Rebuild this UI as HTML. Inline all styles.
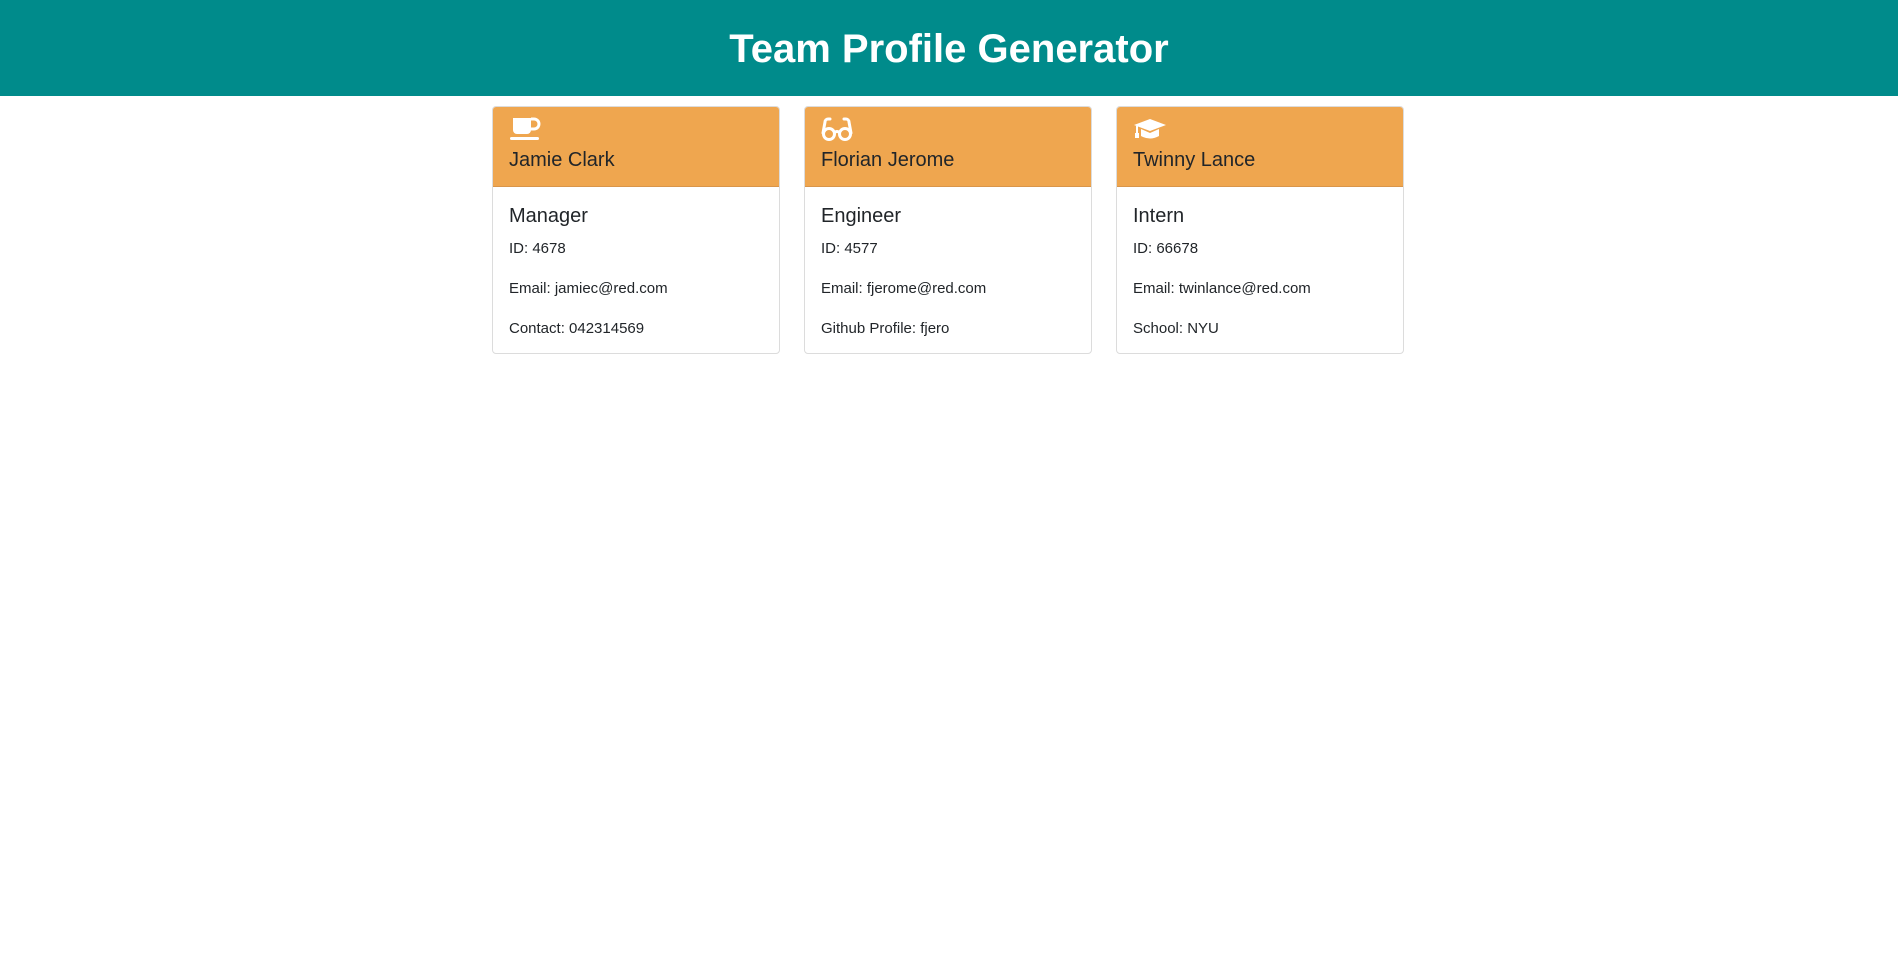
<!DOCTYPE html>
<html><head><style>
body{margin:0;font-family:"Liberation Sans",sans-serif;color:#212529;background:#fff;width:1898px;height:956px;overflow:hidden}
.top{background:#008b8b;height:96px;color:#fff;text-align:center;font-weight:bold;font-size:40px;line-height:98px}
.cards{position:relative}
.card{position:absolute;top:10px;width:286px;height:246px;border:1px solid #dcdcdc;border-radius:4px;overflow:hidden}
.hd{background:#efa64f;height:79px;border-bottom:1px solid #d9954a;position:relative}
.hd svg{position:absolute;left:16px;top:10px}
.hd .n{position:absolute;left:16px;top:42px;font-size:20px}
.bd{padding:16px}
.bd h3{margin:0 0 8px;font-size:20px;font-weight:500;line-height:26px}
.bd p{margin:0 0 16px;font-size:15px;line-height:24px}
</style></head><body>
<div class="top">Team Profile Generator</div>
<div class="cards">
<div class="card" style="left:492px"><div class="hd">
<svg width="32" height="24" viewBox="0 0 32 24"><path d="M4 1h18v12a4 4 0 0 1-4 4H8a4 4 0 0 1-4-4z" fill="#fff"/><path d="M22 2h3a5 5 0 0 1 0 10h-3" stroke="#fff" stroke-width="3" fill="none"/><rect x="1" y="20" width="29" height="3" rx="1.5" fill="#fff"/></svg>
<div class="n">Jamie Clark</div></div>
<div class="bd"><h3>Manager</h3><p>ID: 4678</p><p>Email: jamiec@red.com</p><p>Contact: 042314569</p></div></div>
<div class="card" style="left:804px"><div class="hd">
<svg width="32" height="24" viewBox="0 0 32 24"><path d="M9 2H7a3 3 0 0 0-3 3L2 16" stroke="#fff" stroke-width="3" fill="none" stroke-linecap="round"/><path d="M23 2h2a3 3 0 0 1 3 3l2 11" stroke="#fff" stroke-width="3" fill="none" stroke-linecap="round"/><circle cx="8" cy="17" r="5.5" stroke="#fff" stroke-width="3" fill="none"/><circle cx="24" cy="17" r="5.5" stroke="#fff" stroke-width="3" fill="none"/><path d="M13 16q3-3 6 0" stroke="#fff" stroke-width="3" fill="none"/></svg>
<div class="n">Florian Jerome</div></div>
<div class="bd"><h3>Engineer</h3><p>ID: 4577</p><p>Email: fjerome@red.com</p><p>Github Profile: fjero</p></div></div>
<div class="card" style="left:1116px"><div class="hd">
<svg width="34" height="24" viewBox="0 0 34 24"><path d="M17 2L33 8 17 14 1 8z" fill="#fff"/><path d="M8 12v7q9 5 18 0v-7l-9 4z" fill="#fff"/><rect x="3" y="9" width="2" height="9" fill="#fff"/><rect x="2" y="16" width="4" height="5" fill="#fff"/></svg>
<div class="n">Twinny Lance</div></div>
<div class="bd"><h3>Intern</h3><p>ID: 66678</p><p>Email: twinlance@red.com</p><p>School: NYU</p></div></div>
</div>
</body></html>
